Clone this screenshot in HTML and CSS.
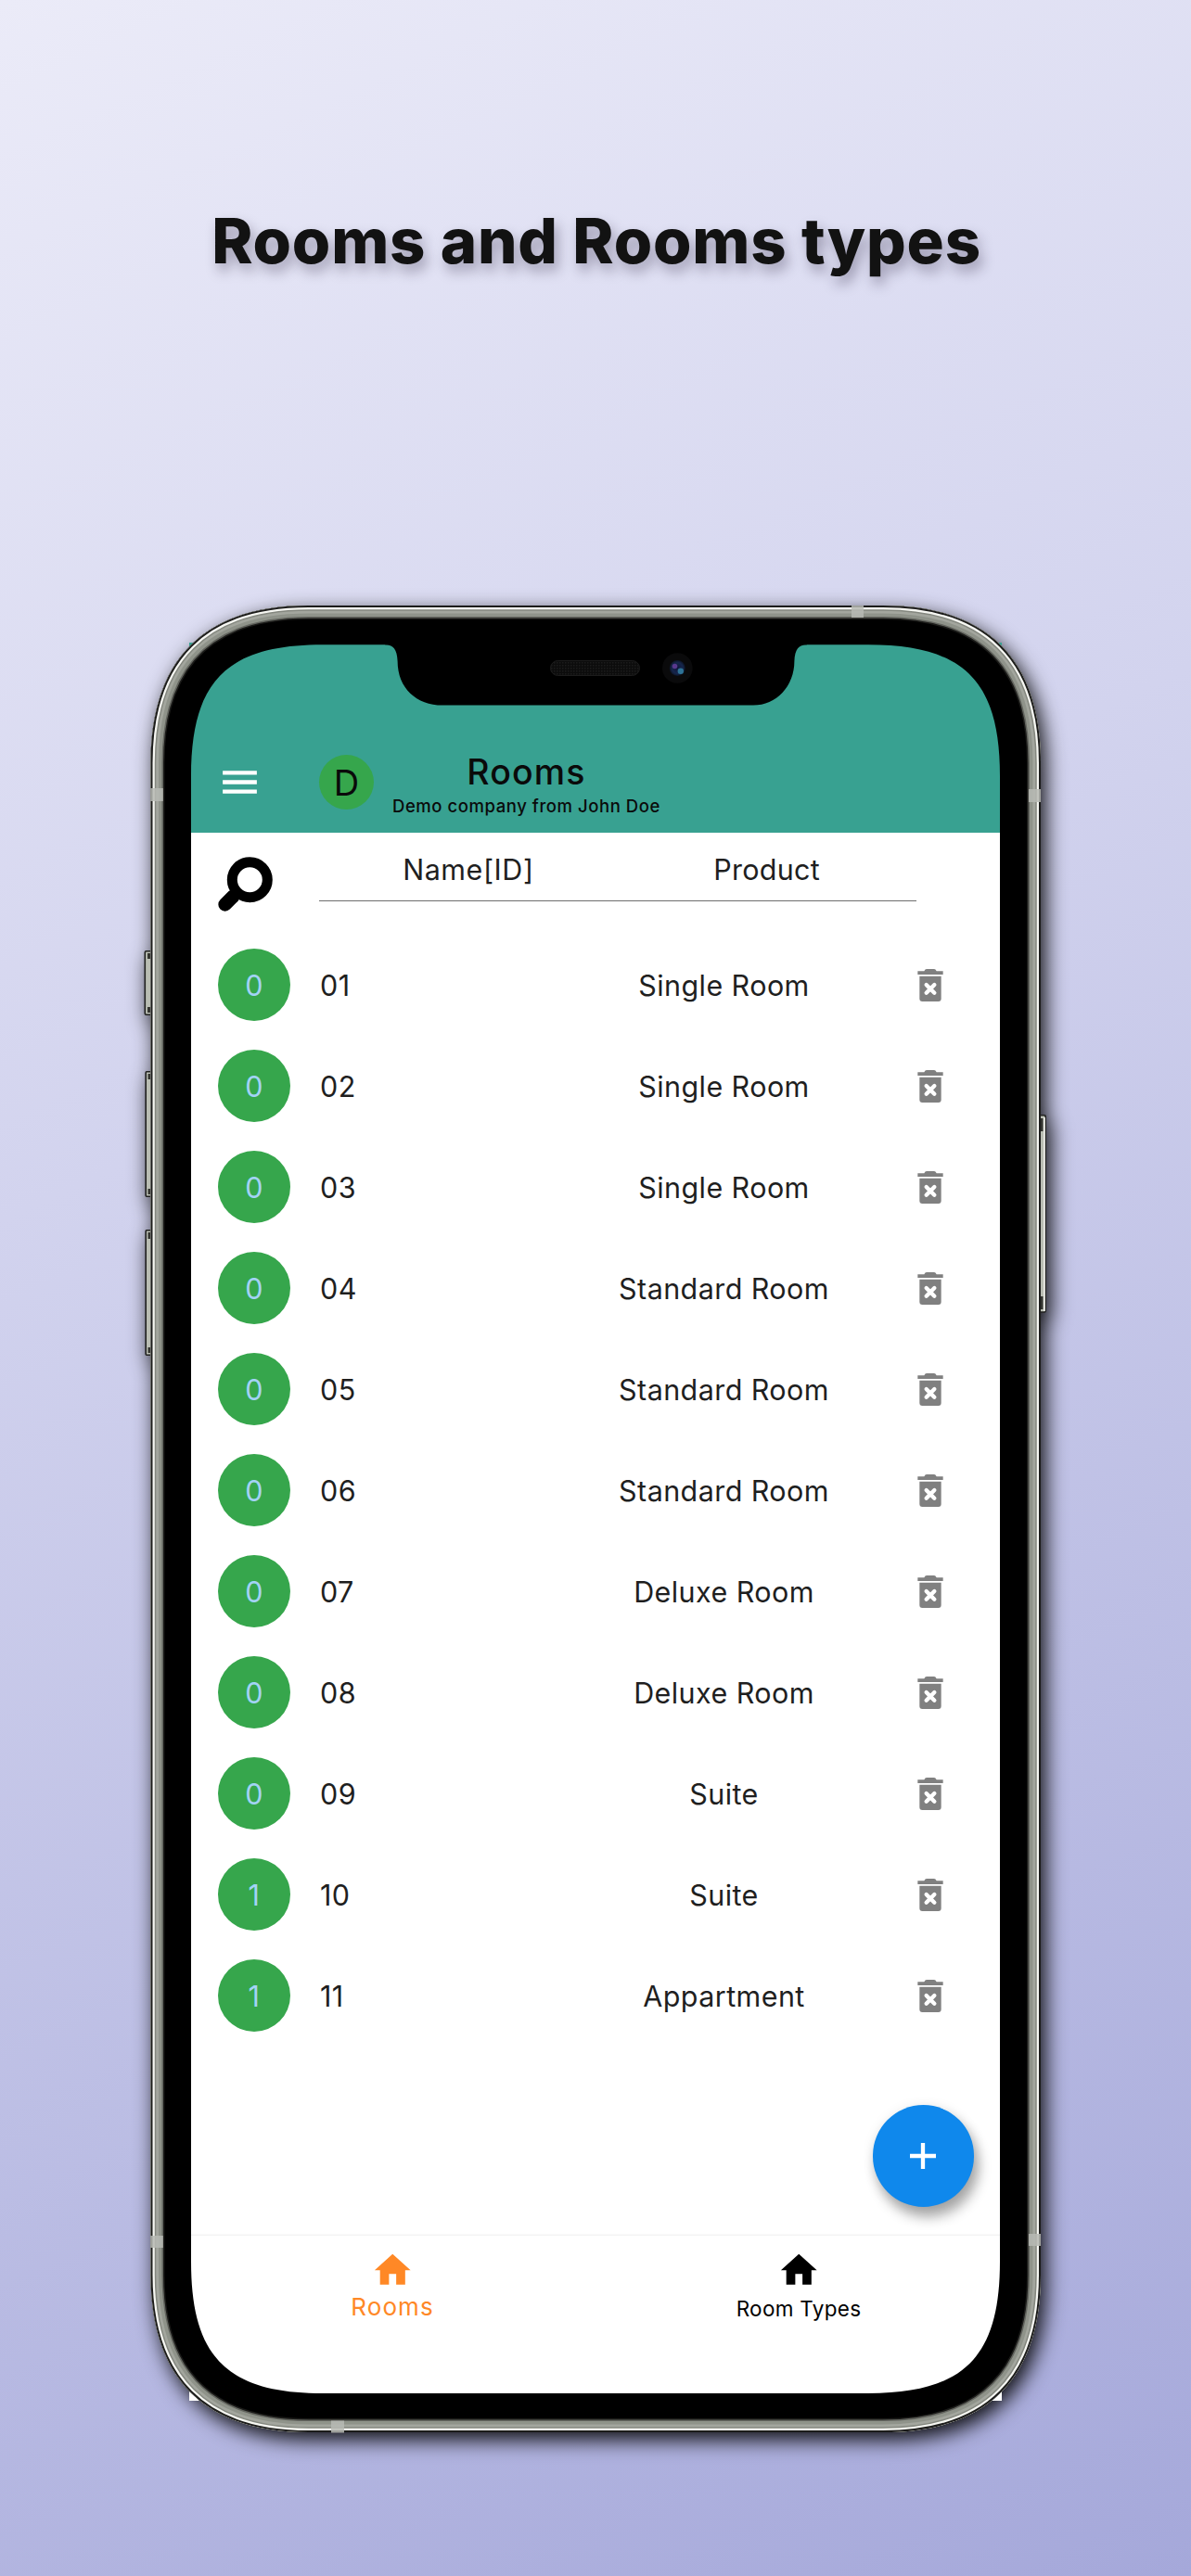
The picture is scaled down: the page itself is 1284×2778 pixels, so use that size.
FILE: index.html
```html
<!DOCTYPE html>
<html lang="en">
<head>
<meta charset="utf-8">
<title>Rooms and Rooms types</title>
<link rel="stylesheet" href="styles.css">
</head>
<body>
<svg class="defs" width="0" height="0">
  <symbol id="trash" viewBox="0 0 84 105">
    <path fill="#808080" d="M1 7h21q3-7 8-7h24q5 0 8 7h21v11H1zM7 23h70v73q0 9-9 9H16q-9 0-9-9z"/>
    <path stroke="#fff" stroke-width="13" stroke-linecap="round" d="M29 51l26 26M55 51l-26 26"/>
  </symbol>
  <symbol id="home" viewBox="0 0 24 24">
    <path fill="currentColor" d="M10 20v-6h4v6h5v-8h3L12 3 2 12h3v8z"/>
  </symbol>
</svg>
<main class="stage">
  <h1 class="headline">Rooms and Rooms types</h1>
  <div class="phone">
    <svg class="frame frame-shadow" viewBox="162 653 960 1970">
      <defs>
        <path id="body" d="M162.500 823C162.500 711 220.500 653 332.500 653H952C1064 653 1122 711 1122 823V2453C1122 2565 1064 2623 952 2623H332.500C220.500 2623 162.500 2565 162.500 2453Z"/>
      </defs>
      <g fill="#b9bdb2" stroke="#20211f" stroke-width="1.6">
        <path d="M163 1025.800h-5.500q-1.200 0-1.200 1.200v66q0 1.200 1.200 1.200h5.500zM163 1155.800h-5q-.8 0-.8 1v132.500q0 1 .8 1h5zM163 1326.800h-5q-.8 0-.8 1v132.500q0 1 .8 1h5zM1121 1202.800h5q1.200 0 1.200 1.200v210q0 1-1.200 1h-5z"/>
      </g>
      <use href="#body"/>
      <path stroke="#fafaf6" stroke-width="1.500" fill="none" d="M1126 1205v209"/>
      <path stroke="#33342f" stroke-width="3" d="M160.500 1028v6M160.500 1086v6M161 1158v6M161 1282v6M161 1329v7M161 1453v6M1123 1206v14M1123 1398v14"/>
    </svg>

    <div class="screen">
      <header class="appbar">
        <svg class="menu" viewBox="0 0 24 24"><path fill="#fff" d="M3 6h18v2.100H3zM3 10.950h18v2.100H3zM3 15.900h18v2.100H3z"/></svg>
        <span class="avatar">D</span>
        <div class="titles">
          <span class="title">Rooms</span>
          <span class="subtitle">Demo company from John Doe</span>
        </div>
      </header>

      <section class="list-head">
        <svg class="search" viewBox="0 0 59 59"><circle cx="34.300" cy="24.700" r="19" fill="none" stroke="#000" stroke-width="11"/><path stroke="#000" stroke-width="14.500" stroke-linecap="round" d="M7.600 51.400L16.500 42.500"/></svg>
        <div class="columns"><span class="col-name">Name[ID]</span><span>Product</span></div>
      </section>

      <ul class="rooms">
        <li class="room"><span class="count">0</span><span>01</span><span class="product">Single Room</span><svg class="trash"><use href="#trash"/></svg></li>
        <li class="room"><span class="count">0</span><span>02</span><span class="product">Single Room</span><svg class="trash"><use href="#trash"/></svg></li>
        <li class="room"><span class="count">0</span><span>03</span><span class="product">Single Room</span><svg class="trash"><use href="#trash"/></svg></li>
        <li class="room"><span class="count">0</span><span>04</span><span class="product">Standard Room</span><svg class="trash"><use href="#trash"/></svg></li>
        <li class="room"><span class="count">0</span><span>05</span><span class="product">Standard Room</span><svg class="trash"><use href="#trash"/></svg></li>
        <li class="room"><span class="count">0</span><span>06</span><span class="product">Standard Room</span><svg class="trash"><use href="#trash"/></svg></li>
        <li class="room"><span class="count">0</span><span>07</span><span class="product">Deluxe Room</span><svg class="trash"><use href="#trash"/></svg></li>
        <li class="room"><span class="count">0</span><span>08</span><span class="product">Deluxe Room</span><svg class="trash"><use href="#trash"/></svg></li>
        <li class="room"><span class="count">0</span><span>09</span><span class="product">Suite</span><svg class="trash"><use href="#trash"/></svg></li>
        <li class="room"><span class="count">1</span><span>10</span><span class="product">Suite</span><svg class="trash"><use href="#trash"/></svg></li>
        <li class="room"><span class="count">1</span><span>11</span><span class="product">Appartment</span><svg class="trash"><use href="#trash"/></svg></li>
      </ul>

      <div class="fab"><svg viewBox="0 0 28 28"><path stroke="#fff" stroke-width="4.300" d="M14 0v28M0 14h28"/></svg></div>

      <nav class="tabs">
        <div class="tab active"><svg class="home"><use href="#home"/></svg><span>Rooms</span></div>
        <div class="tab"><svg class="home"><use href="#home"/></svg><span>Room Types</span></div>
      </nav>
    </div>

    <svg class="frame" viewBox="162 653 960 1970">
      <defs>
        <clipPath id="clip"><use href="#body"/></clipPath>
        <radialGradient id="lens"><stop offset="0" stop-color="#10163a"/><stop offset=".7" stop-color="#16264c"/><stop offset="1" stop-color="#0c1424"/></radialGradient>
        <pattern id="mesh" width="3" height="3" patternUnits="userSpaceOnUse"><rect width="3" height="3" fill="#0c0c0c"/><rect width="1.500" height="1.500" fill="#1b1b1b"/></pattern>
      </defs>
      <path fill-rule="evenodd" d="M162.500 823C162.500 711 220.500 653 332.500 653H952C1064 653 1122 711 1122 823V2453C1122 2565 1064 2623 952 2623H332.500C220.500 2623 162.500 2565 162.500 2453ZM206 837C206 734 245 695.300 348 695.300H936C1039 695.300 1078 734 1078 837V2439C1078 2542 1039 2581 936 2581H348C245 2581 206 2542 206 2439Z"/>
      <path d="M415 694.500V695.300C424 695.300 428 700 428.600 713C428.600 742 449 760.600 477 760.600H812C837 760.600 856.400 740 856.400 713C857 700 861 695.300 870 695.300V694.500Z"/>
      <g clip-path="url(#clip)" fill="none">
        <use href="#body" stroke="#1b1b19" stroke-width="30"/>
        <use href="#body" stroke="#63655f" stroke-width="27"/>
        <use href="#body" stroke="#8f938a" stroke-width="24"/>
        <use href="#body" stroke="#a3a69e" stroke-width="17"/>
        <use href="#body" stroke="#84877f" stroke-width="11.500"/>
        <use href="#body" stroke="#f6f7f2" stroke-width="8.500"/>
        <use href="#body" stroke="#1c1c1b" stroke-width="4"/>
      </g>
      <path fill="#b7bab4" fill-opacity=".85" d="M918 653h13v13h-13zM162.300 850h13.500v14h-13.500zM1109 851h13v14h-13zM162.300 2411h13.500v13h-13.500zM1109 2409h13v13h-13zM357 2610.500h14v13h-14z"/>
      <rect x="593.500" y="712.500" width="96" height="16" rx="8" fill="url(#mesh)" stroke="#1c1c1c" stroke-width="1"/>
      <circle cx="730.300" cy="720.500" r="16.300" fill="#0a0a0b"/>
      <circle cx="730.300" cy="720.500" r="8.500" fill="url(#lens)"/>
      <circle cx="727.500" cy="718.500" r="2.800" fill="#58388c"/>
      <circle cx="733.800" cy="723.800" r="3.200" fill="#2e7396"/>
    </svg>
  </div>
</main>
</body>
</html>
```
FILE: styles.css
```css
* { box-sizing: border-box; }

body {
  margin: 0;
  font-family: Inter, "Liberation Sans", sans-serif;
  color: #1f1f1f;
}

.defs { display: block; }

.stage {
  display: flex;
  flex-direction: column;
  align-items: center;
  width: 1284px;
  height: 2778px;
  padding-top: 220px;
  overflow: hidden;
  background: linear-gradient(155deg, #ebebf8 0%, #d2d3ee 39%, #a5a8da 100%);
}

.headline {
  margin: 0;
  padding-left: 2px;
  font-size: 67px;
  font-weight: 850;
  line-height: 80px;
  letter-spacing: .8px;
  white-space: nowrap;
  color: #121212;
  text-shadow: 4px 8px 14px rgba(30, 20, 50, .34);
}

.phone {
  position: relative;
  width: 960px;
  height: 1970px;
  margin-top: 353px;
  padding: 40px 42px;
}

.frame {
  position: absolute;
  inset: 0;
  width: 960px;
  height: 1970px;
  overflow: visible;
}

.frame-shadow { filter: drop-shadow(5px 8px 11px rgba(0, 0, 0, .92)); }

.screen {
  position: relative;
  display: flex;
  flex-direction: column;
  width: 876px;
  height: 1896px;
  background: #fff;
}

.appbar {
  display: flex;
  align-items: center;
  height: 205.3px;
  padding: 97px 31px 0;
  background: #38a191;
  color: #0a0a0a;
}

.menu { width: 49px; height: 49px; margin: -1px 1px 0 -1px; }

.avatar {
  display: grid;
  place-items: center;
  width: 59px;
  height: 59px;
  margin: -1px 20px 0 60px;
  border-radius: 50%;
  background: #36a64c;
  font-size: 38px;
}

.titles {
  display: flex;
  flex-direction: column;
  align-items: center;
  margin-top: 5px;
  font-weight: 500;
}

.title { font-size: 37.5px; line-height: 44px; letter-spacing: 1.2px; }
.subtitle { font-size: 18.5px; line-height: 28px; letter-spacing: .56px; }

.list-head {
  display: flex;
  gap: 50px;
  height: 109.2px;
  padding: 19px 0 0 31px;
  font-size: 30.5px;
  line-height: 41px;
  letter-spacing: .3px;
}

.search { width: 59px; height: 59px; margin-top: 7px; }

.columns {
  display: grid;
  grid-template-columns: 1fr 1fr;
  width: 643.5px;
  height: 55px;
  border-bottom: 1.5px solid #6e6e6e;
  text-align: center;
}

.col-name { letter-spacing: .55px; }

.rooms {
  flex: 1;
  margin: 0;
  padding: 0;
  list-style: none;
  font-size: 30.5px;
  letter-spacing: .42px;
}

.room {
  display: grid;
  grid-template-columns: 110px 289px 293px 62px 28px;
  align-items: center;
  height: 109.06px;
  padding-left: 31px;
}

.count {
  display: grid;
  place-items: center;
  width: 78px;
  height: 78px;
  border-radius: 50%;
  background: #36a64c;
  color: #a3d3f5;
}

.product { text-align: center; }

.trash { grid-column: 5; width: 28px; height: 35px; }

.fab {
  position: absolute;
  left: 736.7px;
  top: 1577.2px;
  display: grid;
  place-items: center;
  width: 109.5px;
  height: 109.5px;
  border-radius: 50%;
  background: #0f88ec;
  box-shadow: 5px 11px 14px rgba(0, 0, 0, .32), 1px 2px 14px rgba(0, 0, 0, .1);
}

.fab svg { width: 28px; height: 28px; }

.tabs {
  display: grid;
  grid-template-columns: 1fr 1fr;
  height: 178.5px;
  padding-top: 14px;
  box-shadow: 0 -1px 2px rgba(0, 0, 0, .07);
}

.tab {
  display: flex;
  flex-direction: column;
  align-items: center;
  color: #000;
  font-size: 22.5px;
  line-height: 38px;
  letter-spacing: .3px;
}

.tab.active { color: #ff8826; font-size: 26px; line-height: 34px; letter-spacing: 1.1px; }

.home { width: 46.500px; height: 46.500px; }
```
